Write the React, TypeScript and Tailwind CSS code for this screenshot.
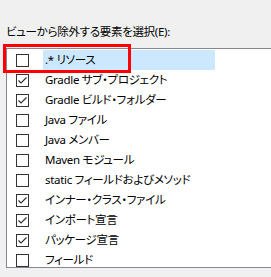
import React from "react";

const items: { label: string; checked: boolean }[] = [
  { label: ".* リソース", checked: false },
  { label: "Gradle サブ・プロジェクト", checked: true },
  { label: "Gradle ビルド・フォルダー", checked: true },
  { label: "Java ファイル", checked: false },
  { label: "Java メンバー", checked: false },
  { label: "Maven モジュール", checked: false },
  { label: "static フィールドおよびメソッド", checked: false },
  { label: "インナー・クラス・ファイル", checked: true },
  { label: "インポート宣言", checked: true },
  { label: "パッケージ宣言", checked: true },
  { label: "フィールド", checked: false },
];

const Check: React.FC<{ checked: boolean }> = ({ checked }) => (
  <div className="w-[13px] h-[13px] border border-[#333333] bg-white flex items-center justify-center">
    {checked && (
      <svg width="11" height="11" viewBox="0 0 11 11">
        <path d="M1.5 5.5 L4 8 L9.5 2.5" fill="none" stroke="#333333" strokeWidth="1.2" />
      </svg>
    )}
  </div>
);

const App: React.FC = () => {
  return (
    <div
      className="relative w-[271px] h-[277px] overflow-hidden bg-[#f0f0f0] text-[11.5px] text-black [font-feature-settings:'palt']"
      style={{ fontFamily: '"Noto Sans", "Noto Sans CJK JP", sans-serif' }}
    >
      <div className="pt-[24px] pl-[6px]">
        <div className="leading-[16px] h-[16px] tracking-[-0.3px]">ビューから除外する要素を選択(E):</div>

        <div className="mt-[8px] w-[300px] h-[220px] border border-[#828790] bg-white py-[1px]">
          {items.map((item, idx) => (
            <div key={idx} className="h-[20px] flex items-center">
              <div className="pl-[9px] pr-[14px]">
                <Check checked={item.checked} />
              </div>
              <div
                className={
                  "h-[20px] leading-[20px] pl-[2px] whitespace-nowrap tracking-[-0.3px] " +
                  (idx === 0 ? "w-[172px] bg-[#cce8ff]" : "")
                }
              >
                {item.label}
              </div>
            </div>
          ))}
        </div>
      </div>

      {/* red highlight annotation */}
      <div className="absolute left-[3px] top-[44px] w-[128px] h-[29px] border-[3px] border-[#ff0000]" />
    </div>
  );
};

export default App;
